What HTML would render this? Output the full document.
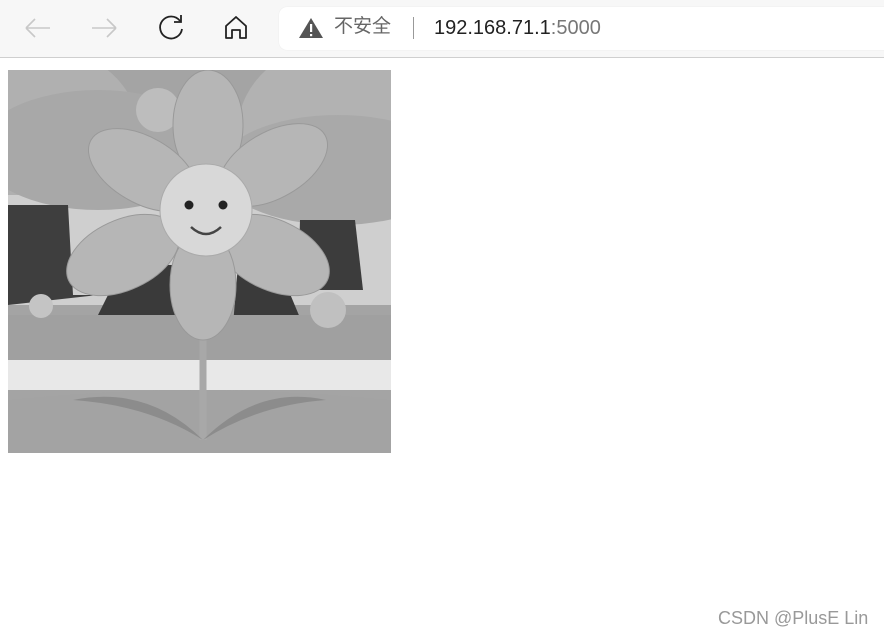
<!DOCTYPE html>
<html><head><meta charset="utf-8"><style>
html,body{margin:0;padding:0;width:884px;height:636px;background:#fff;overflow:hidden;font-family:"Liberation Sans","Noto Sans CJK SC",sans-serif}
.bar{position:absolute;left:0;top:0;width:884px;height:57px;background:#f7f7f7;border-bottom:1px solid #cfcfcf}
.addr{position:absolute;left:279px;top:7px;width:620px;height:43px;background:#fff;border-radius:8px;box-shadow:0 0 1px #ddd}
.t{position:absolute;font-size:20px;line-height:24px}
.wm{position:absolute;left:718px;top:608px;font-size:18px;color:#999}
</style></head><body>
<div class="bar">
<svg style="position:absolute;left:0;top:0" width="270" height="57">
<g fill="none" stroke="#c8c8c8" stroke-width="1.6"><path d="M26 28h24M26 28l9-9M26 28l9 9"/><path d="M92 28h24M116 28l-9-9M116 28l-9 9"/></g>
<g fill="none" stroke="#222" stroke-width="1.8"><path d="M180 21a11 11 0 1 0 2 8"/><path d="M181 15v7h-7"/>
<path d="M226 26l10-9 10 9v12h-6v-8h-8v8h-6z" stroke-linejoin="round"/></g>
</svg>
<div class="addr">
<svg style="position:absolute;left:19px;top:10px" width="26" height="22"><path d="M13 1L25 21H1z" fill="#555"/><rect x="12" y="7" width="2.2" height="8" fill="#fff"/><rect x="12" y="17" width="2.2" height="2.2" fill="#fff"/></svg>
<span class="t" style="left:55px;top:8px;color:#666;font-size:19px">不安全</span>
<span style="position:absolute;left:134px;top:10px;width:1px;height:22px;background:#999"></span>
<span class="t" style="left:155px;top:9px;color:#222">192.168.71.1<span style="color:#777">:5000</span></span>
</div>
</div>
<svg style="position:absolute;left:8px;top:70px" width="383" height="383" viewBox="0 0 383 383">
<rect width="383" height="383" fill="#a4a4a4"/>
<ellipse cx="40" cy="60" rx="90" ry="80" fill="#b0b0b0"/>
<ellipse cx="340" cy="60" rx="110" ry="90" fill="#b2b2b2"/>
<rect x="0" y="125" width="383" height="110" fill="#cfcfcf"/>
<ellipse cx="90" cy="80" rx="120" ry="60" fill="#a8a8a8"/>
<ellipse cx="330" cy="100" rx="120" ry="55" fill="#a9a9a9"/>
<path d="M0 135h60l5 90h25L0 235z" fill="#3e3e3e"/>
<path d="M292 150h55l8 70H290z" fill="#3c3c3c"/>
<path d="M115 195h70v60H85z" fill="#3a3a3a"/>
<path d="M230 195h40l25 60h-70z" fill="#3a3a3a"/>
<rect x="0" y="245" width="383" height="50" fill="#a0a0a0"/>
<circle cx="33" cy="236" r="12" fill="#c4c4c4"/>
<circle cx="320" cy="240" r="18" fill="#c0c0c0"/>
<circle cx="150" cy="40" r="22" fill="#bdbdbd"/>
<rect x="0" y="290" width="383" height="30" fill="#e8e8e8"/>
<path d="M0 330Q190 310 383 330V383H0z" fill="#a3a3a3"/>
<path d="M195 250v120" stroke="#a8a8a8" stroke-width="7"/>
<path d="M65 330Q140 315 195 370Q140 335 65 330z" fill="#8c8c8c"/>
<path d="M318 330Q250 315 195 370Q250 335 318 330z" fill="#8c8c8c"/>
<g fill="#b6b6b6" stroke="#999" stroke-width="1">
<ellipse cx="200" cy="55" rx="35" ry="55"/>
<ellipse cx="135" cy="100" rx="60" ry="33" transform="rotate(30 135 100)"/>
<ellipse cx="265" cy="95" rx="60" ry="33" transform="rotate(-30 265 95)"/>
<ellipse cx="115" cy="185" rx="60" ry="35" transform="rotate(-25 115 185)"/>
<ellipse cx="265" cy="185" rx="60" ry="35" transform="rotate(25 265 185)"/>
<ellipse cx="195" cy="215" rx="33" ry="55"/>
</g>
<circle cx="198" cy="140" r="46" fill="#d8d8d8" stroke="#aaa"/>
<circle cx="181" cy="135" r="4.5" fill="#222"/><circle cx="215" cy="135" r="4.5" fill="#222"/>
<path d="M183 157q15 14 30 0" fill="none" stroke="#444" stroke-width="2.5"/>
</svg>
<div class="wm">CSDN @PlusE Lin</div>
</body></html>
